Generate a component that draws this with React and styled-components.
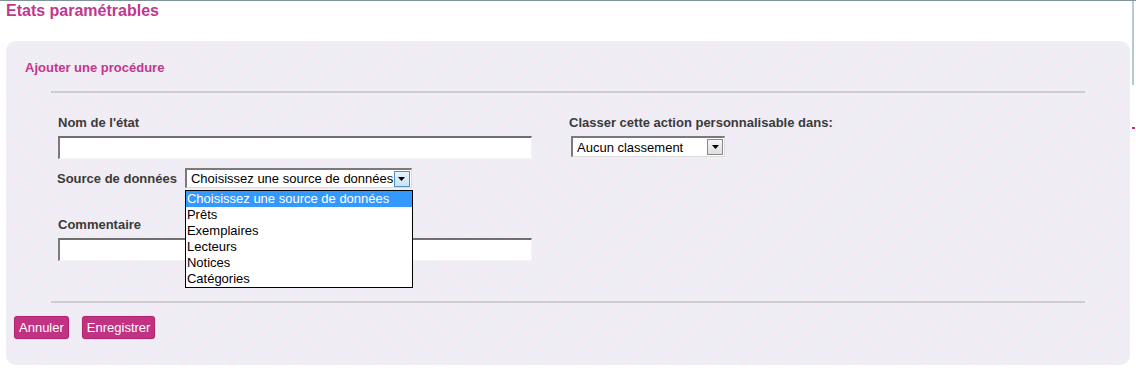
import React from "react";
import styled, { createGlobalStyle } from "styled-components";

const Global = createGlobalStyle`
  html, body { margin: 0; padding: 0; background: #ffffff; }
  body { font-family: "Liberation Sans", Arial, sans-serif; }
  * { box-sizing: border-box; }
`;

const Page = styled.div`
  width: 1136px;
  height: 370px;
  position: relative;
  border-top: 1px solid #7f9498;
  padding: 1px 6px 0 6px;
  overflow: hidden;
`;

const EdgeMark = styled.div`
  position: absolute;
  right: 2px;
  top: 0;
  width: 2px;
  height: 84px;
  background: #b9c6d4;
  &::after {
    content: "";
    position: absolute;
    left: 0;
    top: 126px;
    width: 3px;
    height: 2px;
    background: #c03080;
  }
`;

const Title = styled.h1`
  margin: 0;
  font-size: 16px;
  line-height: 18px;
  font-weight: bold;
  color: #c2378c;
`;

const Panel = styled.section`
  margin-top: 21px;
  width: 1124px;
  height: 324px;
  border-radius: 10px;
  background-color: #f1f0f3;
  background-image: repeating-linear-gradient(
    135deg,
    rgba(250, 226, 244, 0.45) 0px,
    rgba(250, 226, 244, 0.45) 1px,
    rgba(228, 238, 250, 0.45) 1px,
    rgba(228, 238, 250, 0.45) 2px
  );
  padding: 19px 0 0 0;
  display: flex;
  flex-direction: column;
`;

const PanelTitle = styled.h2`
  margin: 0 0 0 19px;
  font-size: 13px;
  line-height: 15px;
  font-weight: bold;
  color: #c2378c;
`;

const Rule = styled.div`
  margin: ${(p) => p.$top}px 45px 0 45px;
  height: 2px;
  background: #cdcdcd;
`;

const FormArea = styled.div`
  display: flex;
  gap: 37px;
  padding: 22px 0 0 52px;
  height: 208px;
`;

const Column = styled.div`
  display: flex;
  flex-direction: column;
  width: ${(p) => p.$width}px;
`;

const Label = styled.label`
  display: block;
  font-size: 13px;
  line-height: 15px;
  font-weight: bold;
  color: #3a3a3a;
  white-space: nowrap;
  margin-bottom: ${(p) => p.$mb ?? 6}px;
  margin-top: ${(p) => p.$mt ?? 0}px;
  margin-left: ${(p) => p.$ml ?? 0}px;
`;

const TextInput = styled.input`
  display: block;
  width: 474px;
  height: 23px;
  margin: 0;
  padding: 0 3px;
  background: #ffffff;
  border-top: 2px solid #6f6f6f;
  border-left: 2px solid #7a7a7a;
  border-right: 1px solid #f4f4f4;
  border-bottom: 1px solid #f4f4f4;
  font-family: "Liberation Sans", Arial, sans-serif;
  font-size: 13px;
  outline: none;
`;

const InlineRow = styled.div`
  display: flex;
  align-items: center;
  gap: 8px;
  margin-top: 9px;
`;

const SelectHolder = styled.div`
  position: relative;
`;

const FakeSelect = styled.div`
  display: flex;
  align-items: center;
  justify-content: space-between;
  width: ${(p) => p.$width}px;
  height: ${(p) => p.$height}px;
  margin-left: ${(p) => p.$ml ?? 0}px;
  background: #ffffff;
  border-top: 2px solid #7a7a7a;
  border-left: 2px solid #7a7a7a;
  border-right: 1px solid #dcdcdc;
  border-bottom: 1px solid #dcdcdc;
  padding: 0 1px 0 4px;
  font-size: 13px;
  color: #000;
  white-space: nowrap;
`;

const ArrowBox = styled.span`
  display: flex;
  align-items: center;
  justify-content: center;
  width: 16px;
  height: 16px;
  border: 1px solid ${(p) => (p.$focus ? "#4f8fc4" : "#8a8a8a")};
  background: ${(p) =>
    p.$focus
      ? "linear-gradient(#e6f2fc, #c8e2f7)"
      : "linear-gradient(#f6f6f6, #dedede)"};
  flex: none;
`;

const DropList = styled.ul`
  position: absolute;
  left: 0;
  top: 22px;
  width: 228px;
  margin: 0;
  padding: 0;
  list-style: none;
  background: #ffffff;
  border: 1px solid #000000;
  z-index: 5;
`;

const Option = styled.li`
  height: 16px;
  line-height: 16px;
  padding-left: 1px;
  font-size: 13px;
  white-space: nowrap;
  color: ${(p) => (p.$selected ? "#ffffff" : "#000000")};
  background: ${(p) => (p.$selected ? "#3399ff" : "transparent")};
`;

const ButtonBar = styled.div`
  display: flex;
  gap: 13px;
  padding: 13px 0 0 8px;
`;

const Button = styled.button`
  height: 23px;
  padding: 0 4px;
  margin: 0;
  border: 1px solid #b0266e;
  border-radius: 3px;
  background: #c13283;
  color: #ffffff;
  font-family: "Liberation Sans", Arial, sans-serif;
  font-size: 13px;
  cursor: pointer;
  box-shadow: 0 0 1px rgba(120, 0, 60, 0.4);
`;

const Arrow = () => (
  <svg width="7" height="4" viewBox="0 0 7 4">
    <path d="M0 0H7L3.5 4Z" fill="#000" />
  </svg>
);

const options = [
  "Choisissez une source de données",
  "Prêts",
  "Exemplaires",
  "Lecteurs",
  "Notices",
  "Catégories",
];

export default function App() {
  return (
    <>
      <Global />
      <Page>
        <EdgeMark />
        <Title>Etats paramétrables</Title>
        <Panel>
          <PanelTitle>Ajouter une procédure</PanelTitle>
          <Rule $top={16} />
          <FormArea>
            <Column $width={474}>
              <Label>Nom de l'état</Label>
              <TextInput type="text" />
              <InlineRow>
                <Label $mb={0} $ml={-1}>Source de données</Label>
                <SelectHolder>
                  <FakeSelect $width={227} $height={20}>
                    <span>Choisissez une source de données</span>
                    <ArrowBox $focus>
                      <Arrow />
                    </ArrowBox>
                  </FakeSelect>
                  <DropList>
                    {options.map((o, i) => (
                      <Option key={o} $selected={i === 0}>
                        {o}
                      </Option>
                    ))}
                  </DropList>
                </SelectHolder>
              </InlineRow>
              <Label $mt={29}>Commentaire</Label>
              <TextInput type="text" />
            </Column>
            <Column $width={300}>
              <Label>Classer cette action personnalisable dans:</Label>
              <FakeSelect $width={154} $height={21} $ml={2}>
                <span>Aucun classement</span>
                <ArrowBox>
                  <Arrow />
                </ArrowBox>
              </FakeSelect>
            </Column>
          </FormArea>
          <Rule $top={0} />
          <ButtonBar>
            <Button>Annuler</Button>
            <Button>Enregistrer</Button>
          </ButtonBar>
        </Panel>
      </Page>
    </>
  );
}
